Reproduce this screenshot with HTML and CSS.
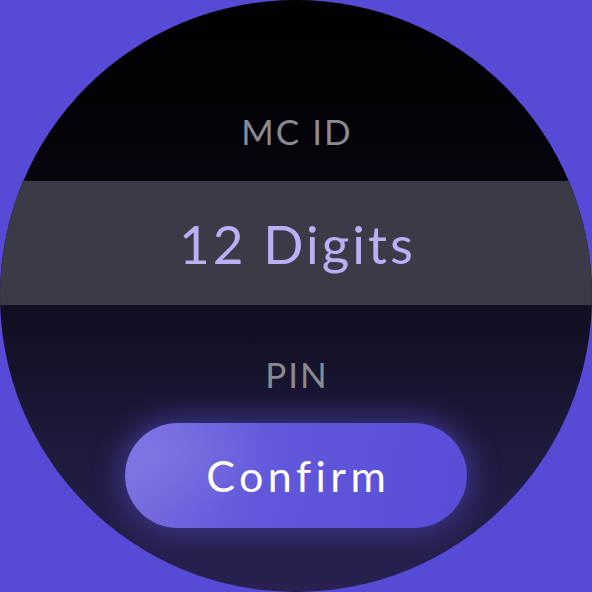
FILE: index.html
```html
<!DOCTYPE html>
<html>
<head>
<meta charset="utf-8">
<link rel="stylesheet" href="styles.css">
</head>
<body>
<div class="watch">
  <div class="label label-top">MC ID</div>
  <div class="band"><span class="value">12 Digits</span></div>
  <div class="label label-pin">PIN</div>
  <button class="confirm">Confirm</button>
</div>
</body>
</html>
```
FILE: styles.css
```css
html, body {
  margin: 0;
  padding: 0;
  width: 592px;
  height: 592px;
  background: #564ad6;
  overflow: hidden;
}
.watch {
  width: 592px;
  height: 592px;
  border-radius: 50%;
  overflow: hidden;
  background: linear-gradient(180deg, #000000 0%, #05040b 25%, #0c0b18 45%, #15122a 60%, #1d1a3c 75%, #262150 100%);
  display: flex;
  flex-direction: column;
  align-items: center;
  padding-top: 108px;
  box-sizing: border-box;
  font-family: "Lato", "Open Sans", sans-serif;
}
.label {
  height: 46px;
  line-height: 46px;
  font-size: 35px;
  color: #8b8a90;
  letter-spacing: 2px;
  text-indent: 2px;
  font-weight: 400;
}
.label-top {
  margin-bottom: 27px;
}
.band {
  align-self: stretch;
  height: 124px;
  background: #3b3a47;
  display: flex;
  align-items: center;
  justify-content: center;
}
.value {
  font-size: 53px;
  color: #b9b1f6;
  letter-spacing: 3px;
  padding-left: 3px;
}
.label-pin {
  margin-top: 46px;
}
.confirm {
  margin-top: 26px;
  width: 342px;
  height: 105px;
  border: none;
  border-radius: 53px;
  background: radial-gradient(ellipse 55% 80% at 8% 30%, rgba(135,128,232,0.45), rgba(135,128,232,0) 70%), linear-gradient(100deg, #7a71e1 0%, #6258db 40%, #584dd8 100%);
  box-shadow: 0 0 28px 6px rgba(95, 84, 225, 0.45);
  color: #ffffff;
  font-family: "Lato", "Open Sans", sans-serif;
  font-size: 43px;
  letter-spacing: 4.5px;
  text-indent: 4.5px;
  padding: 0;
}
```
